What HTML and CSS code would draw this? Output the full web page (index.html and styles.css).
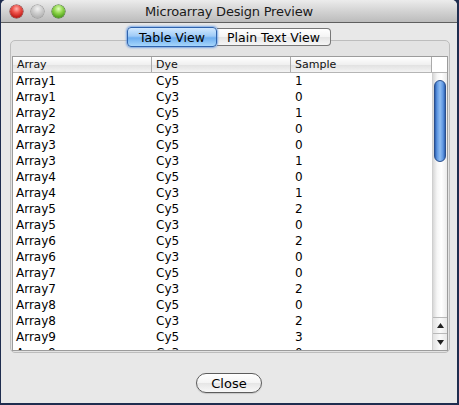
FILE: index.html
```html
<!DOCTYPE html>
<html>
<head>
<meta charset="utf-8">
<title>Microarray Design Preview</title>
<link rel="stylesheet" href="styles.css">
</head>
<body>
<div class="window">
  <div class="titlebar">
    <div class="lights">
      <span class="light red"></span>
      <span class="light grey"></span>
      <span class="light green"></span>
    </div>
    <div class="title">Microarray Design Preview</div>
  </div>
  <div class="tabs">
    <div class="tab active">Table View</div>
    <div class="tab">Plain Text View</div>
  </div>
  <div class="group">
    <div class="table">
      <div class="thead">
        <div class="th c1">Array</div>
        <div class="th c2">Dye</div>
        <div class="th c3">Sample</div>
        <div class="th corner"></div>
      </div>
      <div class="tbody">
        <div class="rows">
          <div class="row"><span class="c1">Array1</span><span class="c2">Cy5</span><span class="c3">1</span></div>
          <div class="row"><span class="c1">Array1</span><span class="c2">Cy3</span><span class="c3">0</span></div>
          <div class="row"><span class="c1">Array2</span><span class="c2">Cy5</span><span class="c3">1</span></div>
          <div class="row"><span class="c1">Array2</span><span class="c2">Cy3</span><span class="c3">0</span></div>
          <div class="row"><span class="c1">Array3</span><span class="c2">Cy5</span><span class="c3">0</span></div>
          <div class="row"><span class="c1">Array3</span><span class="c2">Cy3</span><span class="c3">1</span></div>
          <div class="row"><span class="c1">Array4</span><span class="c2">Cy5</span><span class="c3">0</span></div>
          <div class="row"><span class="c1">Array4</span><span class="c2">Cy3</span><span class="c3">1</span></div>
          <div class="row"><span class="c1">Array5</span><span class="c2">Cy5</span><span class="c3">2</span></div>
          <div class="row"><span class="c1">Array5</span><span class="c2">Cy3</span><span class="c3">0</span></div>
          <div class="row"><span class="c1">Array6</span><span class="c2">Cy5</span><span class="c3">2</span></div>
          <div class="row"><span class="c1">Array6</span><span class="c2">Cy3</span><span class="c3">0</span></div>
          <div class="row"><span class="c1">Array7</span><span class="c2">Cy5</span><span class="c3">0</span></div>
          <div class="row"><span class="c1">Array7</span><span class="c2">Cy3</span><span class="c3">2</span></div>
          <div class="row"><span class="c1">Array8</span><span class="c2">Cy5</span><span class="c3">0</span></div>
          <div class="row"><span class="c1">Array8</span><span class="c2">Cy3</span><span class="c3">2</span></div>
          <div class="row"><span class="c1">Array9</span><span class="c2">Cy5</span><span class="c3">3</span></div>
          <div class="row"><span class="c1">Array9</span><span class="c2">Cy3</span><span class="c3">0</span></div>
          <div class="row"><span class="c1">Array10</span><span class="c2">Cy5</span><span class="c3">3</span></div>
        </div>
        <div class="scrollbar">
          <div class="track"><div class="thumb"></div></div>
          <div class="arrow up"><svg width="7" height="5" viewBox="0 0 7 5"><path d="M3.5 0 L7 5 L0 5 Z" fill="#222"/></svg></div>
          <div class="arrow down"><svg width="7" height="5" viewBox="0 0 7 5"><path d="M0 0 L7 0 L3.5 5 Z" fill="#222"/></svg></div>
        </div>
      </div>
    </div>
  </div>
  <div class="footer">
    <div class="button">Close</div>
  </div>
</div>
</body>
</html>
```

FILE: styles.css
```css
* { box-sizing: border-box; }
html, body { margin: 0; padding: 0; }
body {
  width: 459px;
  height: 405px;
  background: #1f2d4f;
  font-family: "Lucida Grande", "DejaVu Sans", sans-serif;
  color: #000;
  overflow: hidden;
}
.window {
  margin-left: 1px;
  width: 456px;
  height: 403px;
  background: #e8e8e8;
  border-radius: 5px 5px 0 0;
  display: flex;
  flex-direction: column;
  overflow: hidden;
}
.titlebar {
  height: 23px;
  flex: none;
  display: flex;
  align-items: center;
  background: linear-gradient(#ececec, #d3d3d3 50%, #bcbcbc);
  border-bottom: 1px solid #5f5f5f;
  border-radius: 5px 5px 0 0;
}
.lights {
  display: flex;
  gap: 8px;
  padding-left: 9px;
  width: 90px;
  flex: none;
}
.light {
  width: 13px;
  height: 13px;
  border-radius: 50%;
  display: block;
}
.light.red {
  background: radial-gradient(circle at 50% 30%, #ffb5b0 0, #f0554d 35%, #b81410 80%, #8c0c08 100%);
  box-shadow: 0 0 0 0.5px #7a2a28;
}
.light.grey {
  background: radial-gradient(circle at 50% 30%, #f2f2f2 0, #cfcfcf 40%, #a8a8a8 90%);
  box-shadow: 0 0 0 0.5px #8e8e8e;
}
.light.green {
  background: radial-gradient(circle at 50% 30%, #e2ffc0 0, #8fd64a 40%, #3f9212 85%, #2c700a 100%);
  box-shadow: 0 0 0 0.5px #3a6a22;
}
.title {
  flex: 1;
  text-align: center;
  font-size: 13px;
  color: #1a1a1a;
  padding-right: 90px;
  letter-spacing: -0.2px;
}
.tabs {
  flex: none;
  display: flex;
  justify-content: center;
  align-items: center;
  padding-top: 4px;
  height: 24px;
  position: relative;
  z-index: 1;
}
.tab {
  font-size: 12.5px;
  display: flex;
  align-items: center;
  justify-content: center;
  height: 18px;
  background: linear-gradient(#ffffff, #f4f4f4 50%, #e4e4e4 51%, #f6f6f6);
  border: 1px solid #777;
  border-left: none;
  width: 114px;
  border-radius: 0 4px 4px 0;
}
.tab.active {
  width: 90px;
  height: 20px;
  border: 1px solid #2f63ad;
  border-radius: 4px;
  background: linear-gradient(#d2e9ff, #9fcbf7 45%, #6eaef0 55%, #a6d6fb);
  box-shadow: 0 0 2px 1px rgba(90, 150, 230, 0.75);
  position: relative;
}
.group {
  flex: 1;
  margin: -7px 7px 0 9px;
  border: 1px solid #bdbdbd;
  border-radius: 5px;
  background: #e3e3e3;
  padding: 15px 1px 1px 1px;
  display: flex;
  min-height: 0;
}
.table {
  flex: 1;
  display: flex;
  flex-direction: column;
  border: 1px solid #9c9c9c;
  background: #fff;
  min-height: 0;
}
.thead {
  flex: none;
  height: 16px;
  display: flex;
  background: linear-gradient(#ffffff, #f0f0f0 50%, #e2e2e2 55%, #f3f3f3);
  border-bottom: 1px solid #b5b5b5;
}
.th {
  font-size: 11px;
  line-height: 15px;
  padding-left: 4px;
  border-right: 1px solid #aaa;
  color: #111;
}
.c1 { width: 139px; flex: none; }
.c2 { width: 139px; flex: none; }
.c3 { width: 141px; flex: none; }
.th.corner { flex: 1; border-right: none; background: #fff; }
.tbody {
  flex: 1;
  display: flex;
  min-height: 0;
}
.rows {
  flex: 1;
  overflow: hidden;
}
.row {
  display: flex;
  height: 16px;
  font-size: 12px;
  line-height: 16px;
}
.row span { padding-left: 3px; white-space: nowrap; }
.row .c2 { padding-left: 4px; }
.row .c3 { padding-left: 4px; }
.scrollbar {
  width: 15px;
  flex: none;
  display: flex;
  flex-direction: column;
  background: linear-gradient(90deg, #d8d8d8, #f6f6f6 30%, #ffffff 60%, #ececec);
  border-left: 1px solid #cfcfcf;
}
.track {
  flex: 1;
  padding: 7px 1px 0 1px;
}
.thumb {
  height: 82px;
  border-radius: 6px;
  background: linear-gradient(90deg, #2d5fae, #5d95e0 20%, #8fbdf2 50%, #5f97e2 80%, #2d5fae);
  border: 1px solid #2a4f8c;
}
.arrow {
  height: 16px;
  flex: none;
  display: flex;
  align-items: center;
  justify-content: center;
  border-top: 1px solid #b9b9b9;
  background: linear-gradient(90deg, #e2e2e2, #fafafa 50%, #e8e8e8);
}
.arrow.down { height: 17px; }
.footer {
  flex: none;
  height: 50px;
  display: flex;
  justify-content: center;
  padding-top: 20px;
}
.button {
  width: 66px;
  height: 20px;
  border: 1px solid #5c5c5c;
  border-radius: 10px;
  background: linear-gradient(#ffffff, #f4f4f4 50%, #e6e6e6 52%, #f8f8f8);
  font-size: 13px;
  display: flex;
  align-items: center;
  justify-content: center;
  box-shadow: 0 1px 1px rgba(0,0,0,0.15);
}
```
